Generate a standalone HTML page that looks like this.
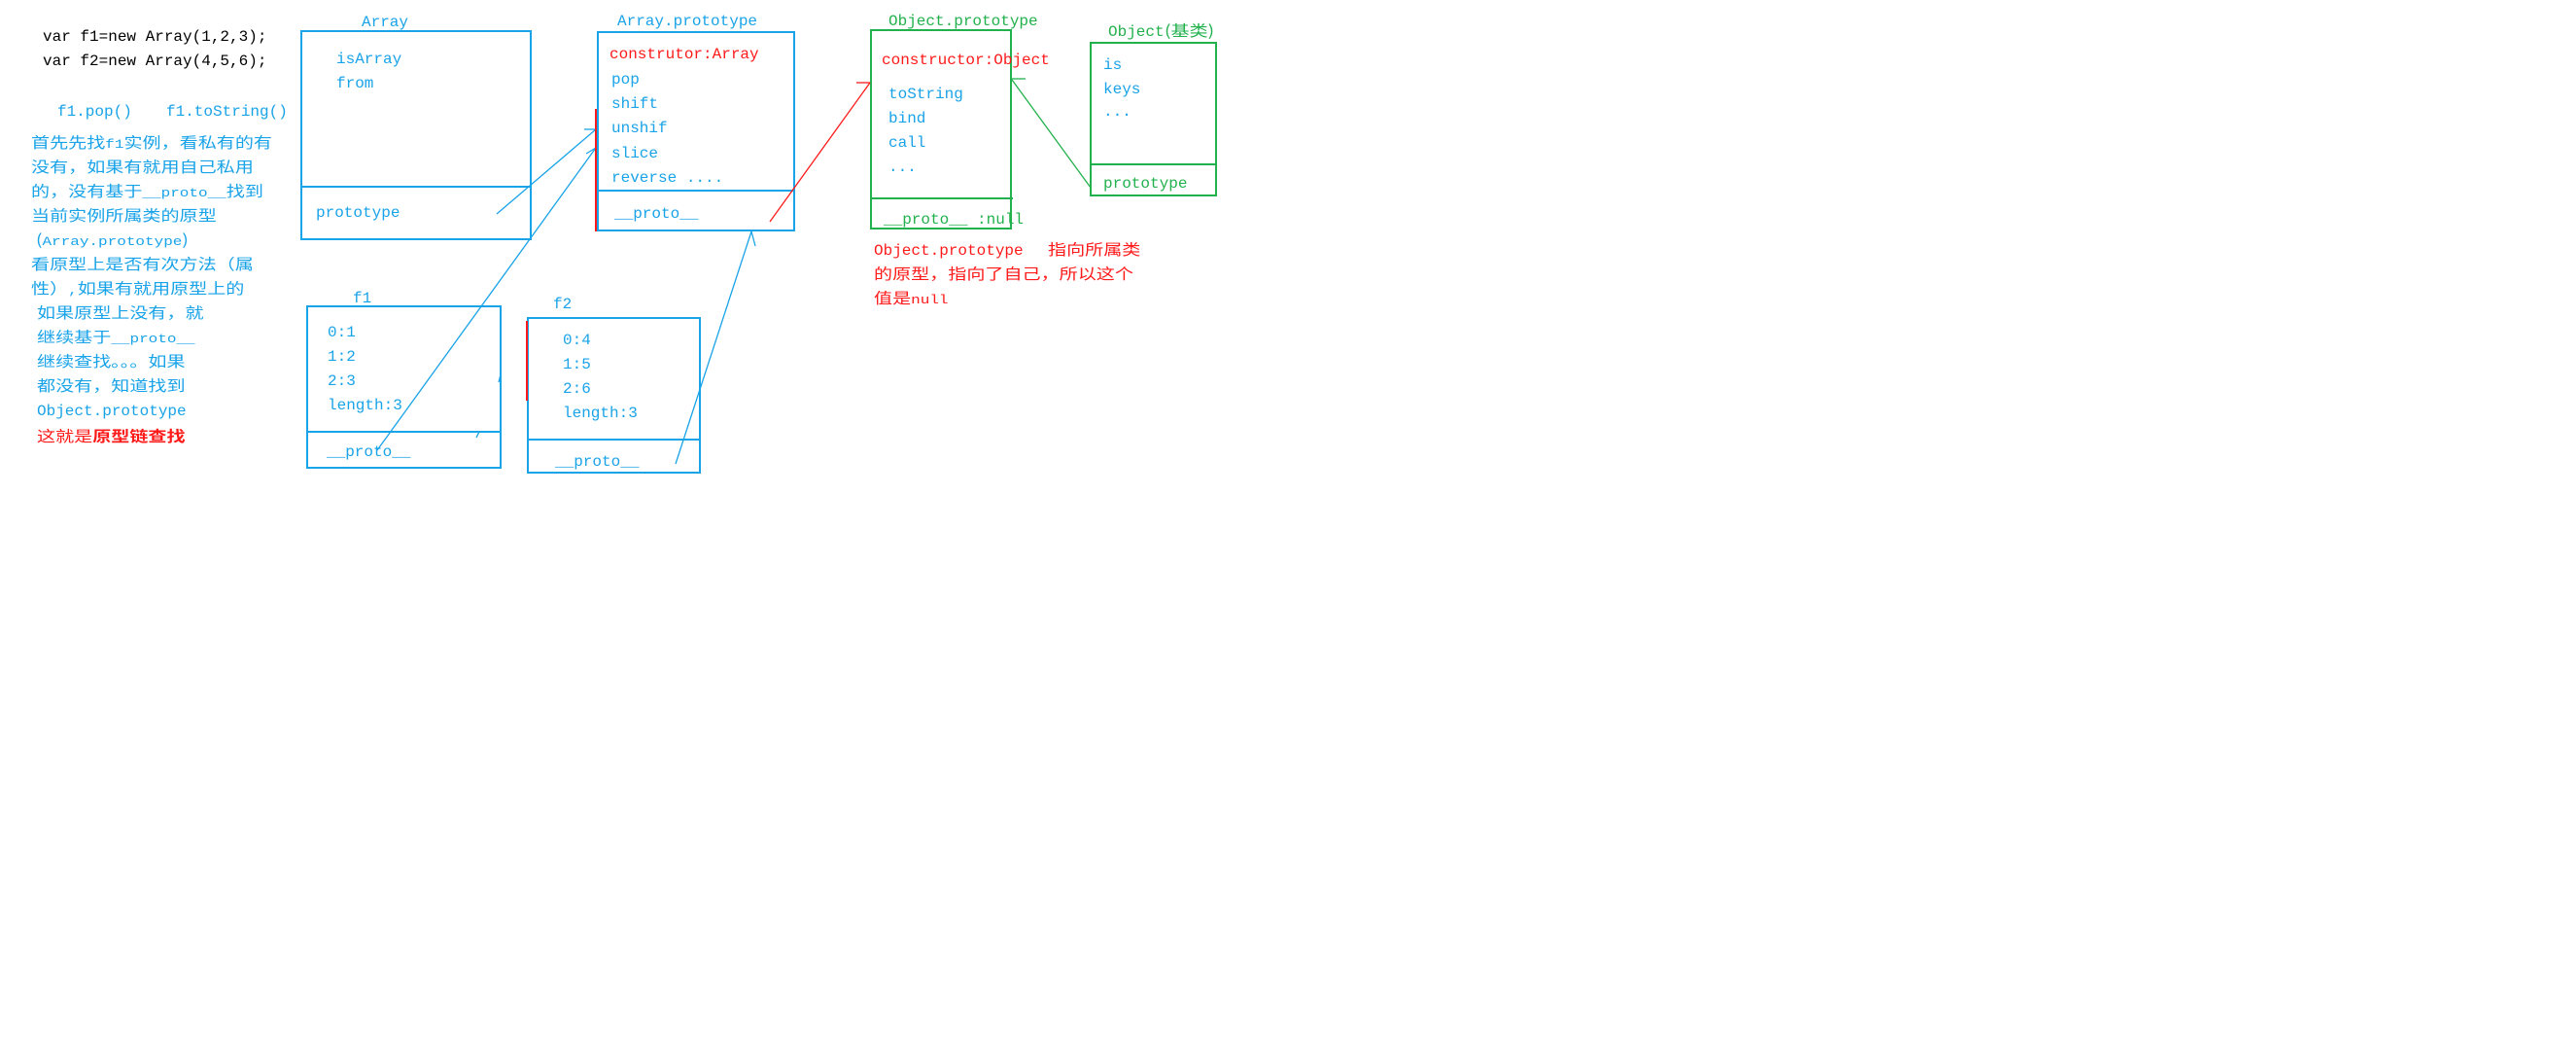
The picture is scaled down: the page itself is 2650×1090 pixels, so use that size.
<!DOCTYPE html>
<html><head><meta charset="utf-8">
<style>
html,body{margin:0;padding:0;background:#fff;}
body{width:2650px;height:1090px;position:relative;overflow:hidden;}
.t{position:absolute;white-space:pre;font-family:"Liberation Mono",monospace;font-size:16px;line-height:20px;}
.b{color:#19a3e8}.r{color:#ff1a1a}.g{color:#22b14c}.k{color:#000}
.cn{position:absolute;white-space:pre;font-family:"Noto Sans CJK SC",sans-serif;font-size:15.5px;line-height:25px;height:25px;transform:scaleX(1.23);transform-origin:0 0;}
.cn .m{font-family:"Liberation Mono",monospace;font-size:13px;line-height:25px;}
svg{position:absolute;left:0;top:0;}
</style></head><body>
<svg width="2650" height="1090" viewBox="0 0 2650 1090">
<g fill="none" stroke="#19a3e8" stroke-width="2">
<rect x="310" y="32" width="236" height="214"/><line x1="310" y1="192" x2="546" y2="192"/>
<rect x="316" y="315" width="199" height="166"/><line x1="316" y1="444" x2="515" y2="444"/>
<rect x="543" y="327" width="177" height="159"/><line x1="543" y1="452" x2="720" y2="452"/>
<rect x="615" y="33" width="202" height="204"/><line x1="615" y1="196" x2="817" y2="196"/>
</g>
<g fill="none" stroke="#22b14c" stroke-width="2">
<rect x="896" y="31" width="144" height="204"/><line x1="896" y1="204" x2="1042" y2="204"/>
<rect x="1122" y="44" width="129" height="157"/><line x1="1122" y1="169" x2="1251" y2="169"/>
</g>
<g fill="none" stroke="#19a3e8" stroke-width="1.3">
<line x1="511" y1="220" x2="613" y2="133"/><line x1="601" y1="133" x2="613" y2="133"/>
<line x1="388" y1="463" x2="613" y2="152"/><line x1="603" y1="158" x2="613" y2="152"/>
<line x1="695" y1="477" x2="773" y2="238"/><line x1="773" y1="238" x2="777" y2="253"/>
<line x1="515" y1="385" x2="513" y2="393"/><line x1="493" y1="444" x2="490" y2="450"/>
</g>
<g fill="none" stroke="#ff1a1a" stroke-width="1.3">
<line x1="792" y1="228" x2="895" y2="85"/><line x1="881" y1="85" x2="895" y2="85"/>
</g>
<g fill="none" stroke="#ff1a1a" stroke-width="2">
<line x1="613" y1="112" x2="613" y2="238"/>
<line x1="542" y1="330" x2="542" y2="412"/>
</g>
<g fill="none" stroke="#22b14c" stroke-width="1.3">
<line x1="1041" y1="82" x2="1122" y2="193"/><line x1="1041" y1="81" x2="1055" y2="81"/>
</g>
</svg>

<div class="t k" style="left:44px;top:28px">var f1=new Array(1,2,3);</div>
<div class="t k" style="left:44px;top:53px">var f2=new Array(4,5,6);</div>
<div class="t b" style="left:59px;top:105px">f1.pop()</div>
<div class="t b" style="left:171px;top:105px">f1.toString()</div>

<div class="cn b" style="left:32px;top:134px">首先先找<span class="m">f1</span>实例，看私有的有</div>
<div class="cn b" style="left:32px;top:159px">没有，如果有就用自己私用</div>
<div class="cn b" style="left:32px;top:184px">的，没有基于<span class="m">__proto__</span>找到</div>
<div class="cn b" style="left:32px;top:209px">当前实例所属类的原型</div>
<div class="cn b" style="left:37px;top:234px">(<span class="m">Array.prototype</span>)</div>
<div class="cn b" style="left:32px;top:259px">看原型上是否有次方法（属</div>
<div class="cn b" style="left:32px;top:284px">性）<span class="m">,</span>如果有就用原型上的</div>
<div class="cn b" style="left:38px;top:309px">如果原型上没有，就</div>
<div class="cn b" style="left:38px;top:334px">继续基于<span class="m">__proto__</span></div>
<div class="cn b" style="left:38px;top:359px">继续查找。。。如果</div>
<div class="cn b" style="left:38px;top:384px">都没有，知道找到</div>
<div class="t b" style="left:38px;top:413px">Object.prototype</div>
<div class="cn r" style="left:38px;top:436px">这就是<b>原型链查找</b></div>

<div class="t b" style="left:372px;top:13px">Array</div>
<div class="t b" style="left:346px;top:51px">isArray</div>
<div class="t b" style="left:346px;top:76px">from</div>
<div class="t b" style="left:325px;top:209px">prototype</div>

<div class="t b" style="left:363px;top:297px">f1</div>
<div class="t b" style="left:337px;top:332px">0:1</div>
<div class="t b" style="left:337px;top:357px">1:2</div>
<div class="t b" style="left:337px;top:382px">2:3</div>
<div class="t b" style="left:337px;top:407px">length:3</div>
<div class="t b" style="left:336px;top:455px">__proto__</div>

<div class="t b" style="left:569px;top:303px">f2</div>
<div class="t b" style="left:579px;top:340px">0:4</div>
<div class="t b" style="left:579px;top:365px">1:5</div>
<div class="t b" style="left:579px;top:390px">2:6</div>
<div class="t b" style="left:579px;top:415px">length:3</div>
<div class="t b" style="left:571px;top:465px">__proto__</div>

<div class="t b" style="left:635px;top:12px">Array.prototype</div>
<div class="t r" style="left:627px;top:46px">construtor:Array</div>
<div class="t b" style="left:629px;top:72px">pop</div>
<div class="t b" style="left:629px;top:97px">shift</div>
<div class="t b" style="left:629px;top:122px">unshif</div>
<div class="t b" style="left:629px;top:148px">slice</div>
<div class="t b" style="left:629px;top:173px">reverse ....</div>
<div class="t b" style="left:632px;top:210px">__proto__</div>

<div class="t g" style="left:914px;top:12px">Object.prototype</div>
<div class="t r" style="left:907px;top:52px">constructor:Object</div>
<div class="t b" style="left:914px;top:87px">toString</div>
<div class="t b" style="left:914px;top:112px">bind</div>
<div class="t b" style="left:914px;top:137px">call</div>
<div class="t b" style="left:914px;top:162px">...</div>
<div class="t g" style="left:909px;top:216px">__proto__ :null</div>

<div class="t g" style="left:1140px;top:23px">Object</div>
<div class="cn g" style="left:1198px;top:19px">(基类)</div>
<div class="t b" style="left:1135px;top:57px">is</div>
<div class="t b" style="left:1135px;top:82px">keys</div>
<div class="t b" style="left:1135px;top:105px">...</div>
<div class="t g" style="left:1135px;top:179px">prototype</div>

<div class="t r" style="left:899px;top:248px">Object.prototype</div>
<div class="cn r" style="left:1078px;top:244px">指向所属类</div>
<div class="cn r" style="left:899px;top:269px">的原型，指向了自己，所以这个</div>
<div class="cn r" style="left:899px;top:294px">值是<span class="m">null</span></div>
</body></html>
